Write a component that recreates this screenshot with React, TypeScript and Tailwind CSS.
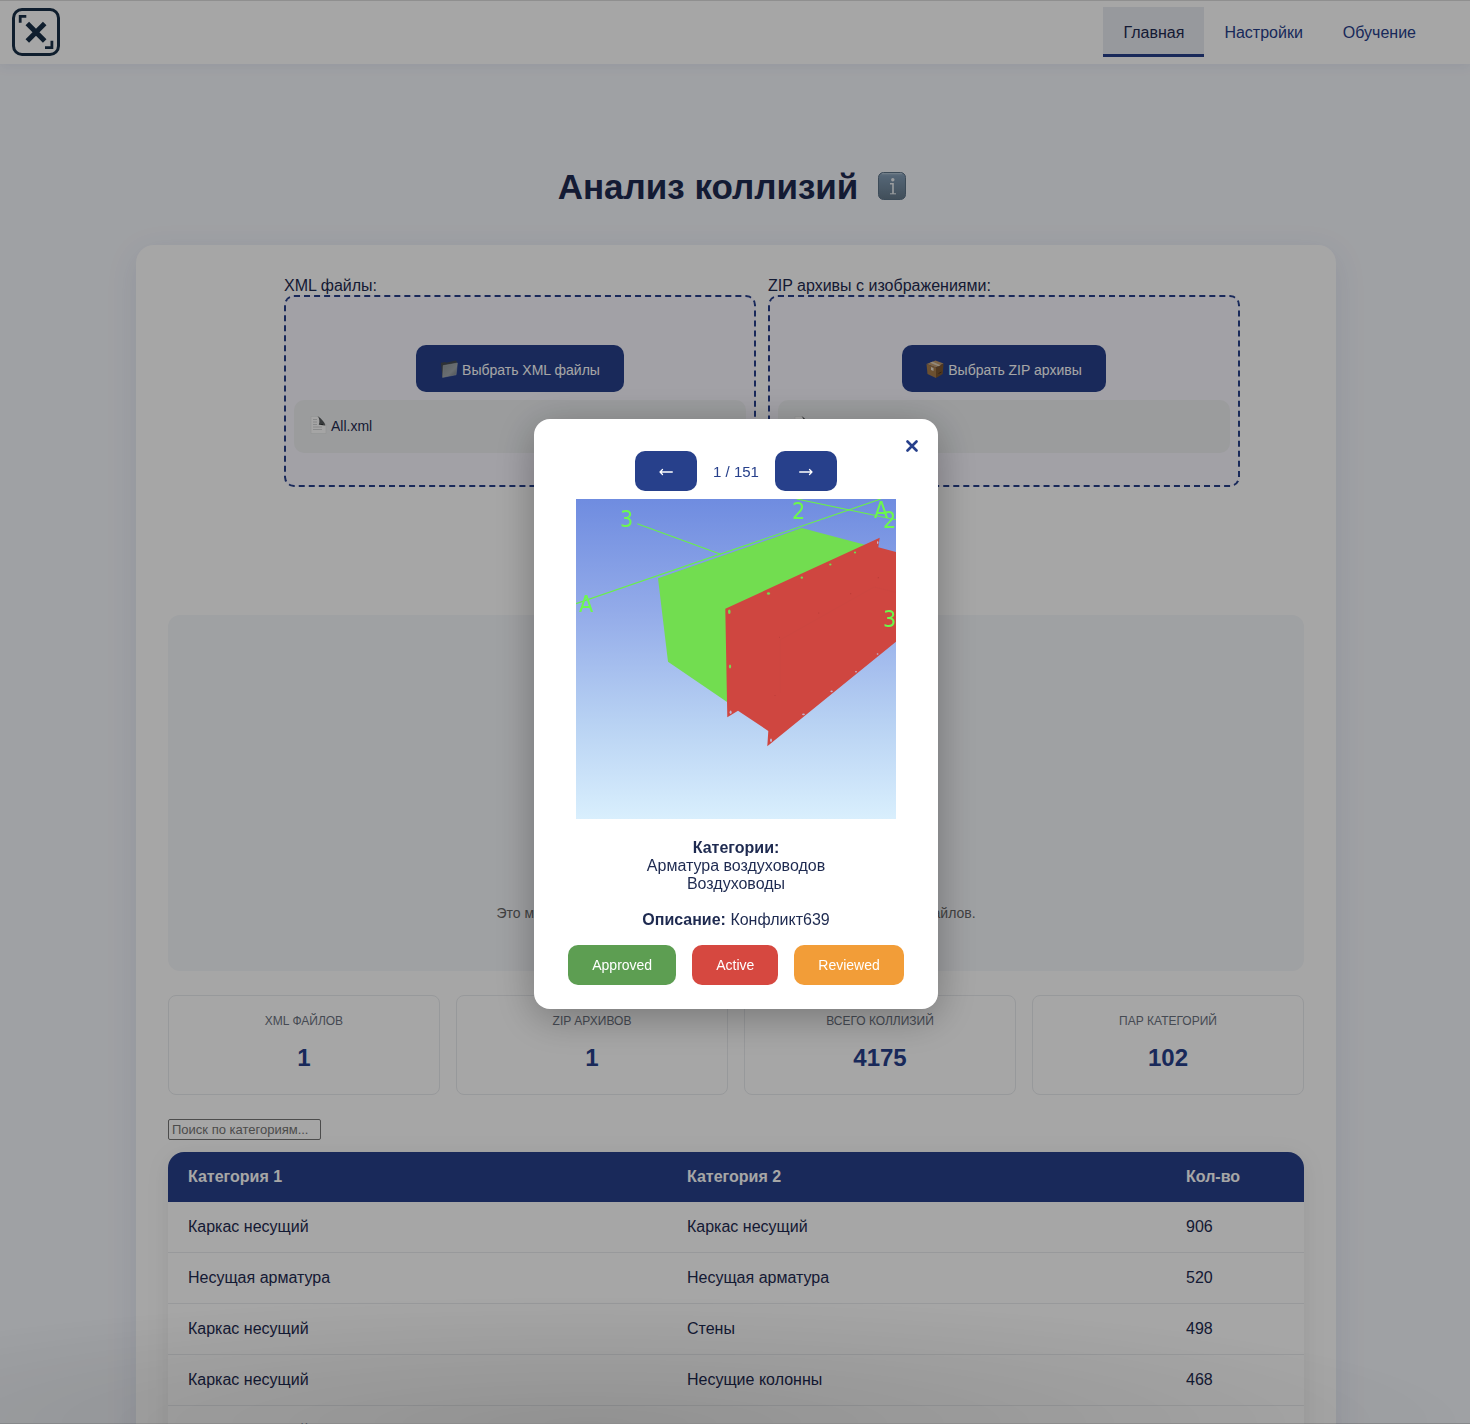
import React from "react";

const navItems = [
  { label: "Главная", active: true },
  { label: "Настройки", active: false },
  { label: "Обучение", active: false },
];

const stats = [
  { label: "XML файлов", value: "1" },
  { label: "ZIP архивов", value: "1" },
  { label: "Всего коллизий", value: "4175" },
  { label: "Пар категорий", value: "102" },
];

const rows = [
  ["Каркас несущий", "Каркас несущий", "906"],
  ["Несущая арматура", "Несущая арматура", "520"],
  ["Каркас несущий", "Стены", "498"],
  ["Каркас несущий", "Несущие колонны", "468"],
  ["Каркас несущий", "Перекрытия", "455"],
];

function Logo() {
  return (
    <svg viewBox="0 0 48 48" className="size-12" fill="none" stroke="#182f47" aria-hidden="true">
      <rect x="1.5" y="1.5" width="45" height="45" rx="8.5" strokeWidth="3" />
      <path d="M15.300 15.500 32.700 32.900M32.700 15.500 15.300 32.900" strokeWidth="5" />
      <path d="M8.200 14.700V8.400H14.300" strokeWidth="2.800" />
      <path d="M39.900 32.700v6.900H33" strokeWidth="2.800" />
    </svg>
  );
}

function InfoIcon() {
  return (
    <svg viewBox="0 0 28 28" className="block size-7" aria-hidden="true">
      <defs>
        <linearGradient id="info-fill" x1="0" y1="0" x2="0" y2="1">
          <stop offset="0" stopColor="#96adc2" />
          <stop offset="0.15" stopColor="#819bb4" />
          <stop offset="1" stopColor="#64798a" />
        </linearGradient>
      </defs>
      <rect x="0.5" y="0.5" width="27" height="27" rx="5" fill="url(#info-fill)" stroke="#5d7388" />
      <path d="M4 1.700h20" stroke="#b4c6d6" strokeWidth="1" />
      <circle cx="14.800" cy="7.800" r="1.700" fill="#eef2f5" />
      <path d="M12 11.800h3v10" fill="none" stroke="#eef2f5" strokeWidth="1.600" />
      <path d="M12 21.800h6" stroke="#eef2f5" strokeWidth="1" />
    </svg>
  );
}

function FolderIcon() {
  return (
    <svg viewBox="0 0 18 18" className="size-[18px]" aria-hidden="true">
      <defs>
        <linearGradient id="folder-fill" x1="0" y1="0" x2="1" y2="1">
          <stop offset="0" stopColor="#8c949b" />
          <stop offset="0.6" stopColor="#a2a9ae" />
          <stop offset="1" stopColor="#6d757d" />
        </linearGradient>
      </defs>
      <path d="M.8 2.800 5.500 2l1 .8L15.500.6l1.200 1L17.200 4 2.500 17.400z" fill="#454c53" />
      <path d="M3.200 5.600 17.400 3l-1.300 11.800L2.600 17.400z" fill="url(#folder-fill)" stroke="#b3b9be" strokeWidth="0.5" />
    </svg>
  );
}

function BoxIcon() {
  return (
    <svg viewBox="0 0 18 18" className="size-[18px]" aria-hidden="true">
      <path d="M.5 4 9.500.5l8 3-7.500 4z" fill="#c09a6e" />
      <path d="M.5 4 10 7.500V18l-8.500-4z" fill="#a67b4b" />
      <path d="m10 7.500 7.500-4-.8 10.500L10 18z" fill="#7d5730" />
      <path d="m4 2.700 8.500 3.500 2-1L6.500 1.700z" fill="#e0d2bd" />
      <path d="m5 7 2.500 1v3L5 10z" fill="#e6ddd0" />
      <path d="m12.500 13.500 3-1.500" stroke="#523719" strokeWidth="1" />
    </svg>
  );
}

function FileIcon() {
  return (
    <svg viewBox="0 0 17 18" className="h-[18px] w-[17px]" aria-hidden="true">
      <path d="M1 .5h7.500L16 8.500v9H1z" fill="#fdfdfd" stroke="#dcdedf" strokeWidth="0.5" />
      <path d="M7.500.3c2.500 1.200 6.500 5 8 9C13.500 8 11 7.800 8.800 8.800 10 5.500 9.500 2 7.500.3z" fill="#55595c" />
      <path d="M8.800 8.800c2.200-1.400 5-1 6.700.7z" fill="#2e3234" />
      <path d="M3 3.500h4M3 6h4M3 8.500h4M3 11h9M3 13.500h9" stroke="#c8cacc" strokeWidth="0.800" />
    </svg>
  );
}

function CollisionView() {
  return (
    <svg
      viewBox="0 0 320 320"
      className="block size-80"
      role="img"
      aria-label="Конфликт639"
      fontFamily="'DejaVu Sans Condensed', 'DejaVu Sans', sans-serif"
      fontSize="23"
    >
      <defs>
        <linearGradient id="sky" x1="0" y1="0" x2="0" y2="1">
          <stop offset="0" stopColor="#6f8ce0" />
          <stop offset="0.35" stopColor="#93abe9" />
          <stop offset="0.7" stopColor="#b8d2f3" />
          <stop offset="1" stopColor="#d9effd" />
        </linearGradient>
      </defs>
      <rect width="320" height="320" fill="url(#sky)" />
      <path d="M82 79.300 225.700 29 289 45.700 200 120 152 203.500 150.700 202.700 92 162.700z" fill="#72dd50" />
      <path
        d="M303.700 38.700 149.300 109.700 151.300 218.300 162 211.700 192.300 232 191.300 247.300 320 142.700V53L302.300 48.300z"
        fill="#cf4640"
      />
      <path d="M204 193.500V141l94-53 22 5.500" fill="none" stroke="#cc4640" strokeWidth="1" />
      <g stroke="#69f04a" strokeWidth="1.100">
        <path d="M0 104.700 304.700 0" />
        <path d="M61.300 24.700 144.700 55.300" />
        <path d="M220.700 0 320 20.700" />
      </g>
      <g fill="#72dd50">
        <ellipse cx="153.300" cy="112.700" rx="1.300" ry="2.300" />
        <ellipse cx="154" cy="167.500" rx="1.100" ry="2" />
        <ellipse cx="192.500" cy="94.500" rx="1.600" ry="1.200" />
        <ellipse cx="225.800" cy="78.700" rx="1.300" ry="1.100" />
        <ellipse cx="254.300" cy="65.500" rx="1.200" ry="1" />
        <ellipse cx="279" cy="53.500" rx="1.100" ry="1" />
      </g>
      <g fill="#c3b5d0">
        <ellipse cx="154.600" cy="213.200" rx="1" ry="1.700" />
        <ellipse cx="195" cy="241.300" rx="1" ry="1.800" />
        <ellipse cx="227.500" cy="215.300" rx="1.400" ry="0.900" />
        <ellipse cx="255.600" cy="192.300" rx="1.200" ry="0.900" />
        <ellipse cx="280" cy="172.800" rx="1" ry="0.800" />
        <ellipse cx="301.600" cy="155" rx="0.900" ry="0.800" />
        <ellipse cx="301.700" cy="43.500" rx="0.700" ry="1.500" />
      </g>
      <g fill="#b83c37">
        <circle cx="203.500" cy="138.300" r="0.500" />
        <circle cx="242.700" cy="114" r="0.600" />
        <circle cx="274.700" cy="94.700" r="0.600" />
        <circle cx="302.300" cy="78.700" r="0.600" />
        <circle cx="199" cy="196.500" r="0.500" />
      </g>
      <g fill="#6cf94c">
        <text x="44" y="28">3</text>
        <text x="216" y="20">2</text>
        <text x="298" y="19">A</text>
        <text x="307" y="29">2</text>
        <text x="307" y="128">3</text>
        <text x="3" y="113">A</text>
      </g>
    </svg>
  );
}

function ArrowIcon({ back = false }: { back?: boolean }) {
  return (
    <svg viewBox="0 0 14 8" className="h-2 w-3.5" fill="none" stroke="white" strokeWidth="1.300" strokeLinecap="round" strokeLinejoin="round" aria-hidden="true">
      {back ? <path d="M13.300 4H1M3.500 1.500 1 4l2.500 2.500" /> : <path d="M.7 4H13M10.500 1.500 13 4l-2.500 2.500" />}
    </svg>
  );
}

function UploadBox(props: { id: string; label: string; button: string; icon: React.ReactNode; file: string }) {
  return (
    <div className="min-w-0 flex-1">
      <label htmlFor={props.id} className="block leading-[18px]">
        {props.label}
      </label>
      <div className="flex flex-col items-center gap-2 rounded-[10px] border-2 border-dashed border-[#27408b] bg-[#f9f7ff] px-2 pt-12 pb-8">
        <button id={props.id} type="button" className="flex h-[47px] items-center gap-1 rounded-[10px] bg-[#27408b] px-6 text-sm font-medium text-white">
          {props.icon}
          <span className="pt-0.5">{props.button}</span>
        </button>
        <div className="flex h-[53px] w-full items-center gap-1 rounded-[10px] bg-[#eef0f2] px-4 pb-1 text-sm">
          <FileIcon />
          <span className="pt-0.5">{props.file}</span>
        </div>
      </div>
    </div>
  );
}

export default function App() {
  return (
    <div className="h-screen overflow-hidden bg-[#f5f7fc] font-['Liberation_Sans',Arial,sans-serif] text-base text-[#1e2a50]">
      <header className="relative flex h-16 items-center justify-between bg-white pr-[34px] pl-3 shadow-[0_2px_12px_rgba(39,64,139,0.08),inset_0_1px_0_#dcdcdc]">
        <Logo />
        <nav className="flex">
          {navItems.map((item) => (
            <a
              key={item.label}
              href="#"
              className={
                item.active
                  ? "flex h-[50px] items-center border-b-[3px] border-[#27408b] bg-[#e9ebf2] px-5 pt-1"
                  : "flex h-[50px] items-center border-b-[3px] border-transparent px-5 pt-1 text-[#27408b]"
              }
            >
              {item.label}
            </a>
          ))}
        </nav>
      </header>

      <main className="pt-[101px] pl-0.5">
        <div className="mb-9 flex items-center justify-center gap-5 pr-2">
          <h1 className="text-[35px] leading-[44px] font-bold">Анализ коллизий</h1>
          <button type="button" aria-label="Информация" className="pb-0.5">
            <InfoIcon />
          </button>
        </div>

        <section className="mx-auto max-w-[1200px] rounded-[18px] bg-white p-8 shadow-[0_8px_32px_rgba(39,64,139,0.10)]">
          <div className="flex gap-3 pr-16 pl-[116px]">
            <UploadBox id="xml-files" label="XML файлы:" button="Выбрать XML файлы" icon={<FolderIcon />} file="All.xml" />
            <UploadBox id="zip-files" label="ZIP архивы с изображениями:" button="Выбрать ZIP архивы" icon={<BoxIcon />} file="All.zip" />
          </div>

          <div className="mt-32 flex min-h-[356px] items-end justify-center rounded-xl bg-[#f5f7fa] pb-12">
            <p className="text-sm leading-5 text-[#666666]">Это может занять несколько минут в зависимости от количества файлов.</p>
          </div>

          <dl className="mt-6 grid grid-cols-4 gap-4">
            {stats.map((stat) => (
              <div key={stat.label} className="flex h-[100px] flex-col items-center rounded-lg border border-[#e9ebee] pt-4">
                <dt className="text-xs leading-[18px] text-[#6b7280] uppercase">{stat.label}</dt>
                <dd className="mt-3 text-2xl leading-8 font-bold text-[#27408b]">{stat.value}</dd>
              </div>
            ))}
          </dl>

          <input
            type="text"
            aria-label="Поиск по категориям"
            placeholder="Поиск по категориям..."
            className="mt-6 block h-[21px] w-[153px] rounded-[2px] border border-[#767676] px-[3px] text-[13px] placeholder:text-[#757575]"
          />

          <div className="mt-3 overflow-hidden rounded-2xl shadow-[0_4px_24px_rgba(0,0,0,0.08)]">
            <table className="w-full table-fixed border-separate border-spacing-0 text-left">
              <thead className="bg-[#27408b] text-white">
                <tr className="h-[50px]">
                  <th className="px-5">Категория 1</th>
                  <th className="px-5">Категория 2</th>
                  <th className="w-[138px] px-5">Кол-во</th>
                </tr>
              </thead>
              <tbody>
                {rows.map((row, index) => (
                  <tr key={index} className="h-[51px]">
                    {row.map((cell, column) => (
                      <td key={column} className="border-b border-[#eaecef] px-5">
                        {cell}
                      </td>
                    ))}
                  </tr>
                ))}
              </tbody>
            </table>
          </div>
        </section>
      </main>

      <div className="fixed inset-0 flex items-center justify-center bg-black/35 pt-1 pl-0.5">
        <div role="dialog" aria-modal="true" aria-label="Коллизия" className="relative flex w-[404px] flex-col items-center rounded-2xl bg-white pt-8 pb-6 shadow-[0_8px_40px_rgba(0,0,0,0.30)]">
          <button type="button" aria-label="Закрыть" className="absolute top-4 right-3.5 flex h-[22px] w-6 items-center justify-center">
            <svg viewBox="0 0 12 12" className="size-3" stroke="#27408b" strokeWidth="2.600" strokeLinecap="round" aria-hidden="true">
              <path d="m1.500 1.500 9 9M10.500 1.500l-9 9" />
            </svg>
          </button>
          <div className="flex items-center gap-4">
            <button type="button" aria-label="Назад" className="flex h-10 w-[62px] items-center justify-center rounded-[10px] bg-[#27408b] pt-0.5">
              <ArrowIcon back />
            </button>
            <span className="pt-0.5 text-[15px] text-[#27408b]">1 / 151</span>
            <button type="button" aria-label="Вперёд" className="flex h-10 w-[62px] items-center justify-center rounded-[10px] bg-[#27408b] pt-0.5">
              <ArrowIcon />
            </button>
          </div>
          <div className="mt-2">
            <CollisionView />
          </div>
          <div className="mt-5 text-center leading-[18px]">
            <strong>Категории:</strong>
            <p>Арматура воздуховодов</p>
            <p>Воздуховоды</p>
            <p className="mt-[18px]">
              <strong>Описание:</strong> Конфликт639
            </p>
          </div>
          <div className="mt-4 flex gap-4 text-sm font-medium text-white">
            <button type="button" className="h-10 rounded-[10px] bg-[#5d9e52] px-6">Approved</button>
            <button type="button" className="h-10 rounded-[10px] bg-[#d64840] px-6">Active</button>
            <button type="button" className="h-10 rounded-[10px] bg-[#f29d38] px-6">Reviewed</button>
          </div>
        </div>
      </div>

      <div className="pointer-events-none fixed inset-x-0 bottom-0 h-32 border-b border-black/15 bg-[radial-gradient(ellipse_60%_100%_at_40%_100%,rgba(0,0,0,0.12),transparent)]" />
    </div>
  );
}
